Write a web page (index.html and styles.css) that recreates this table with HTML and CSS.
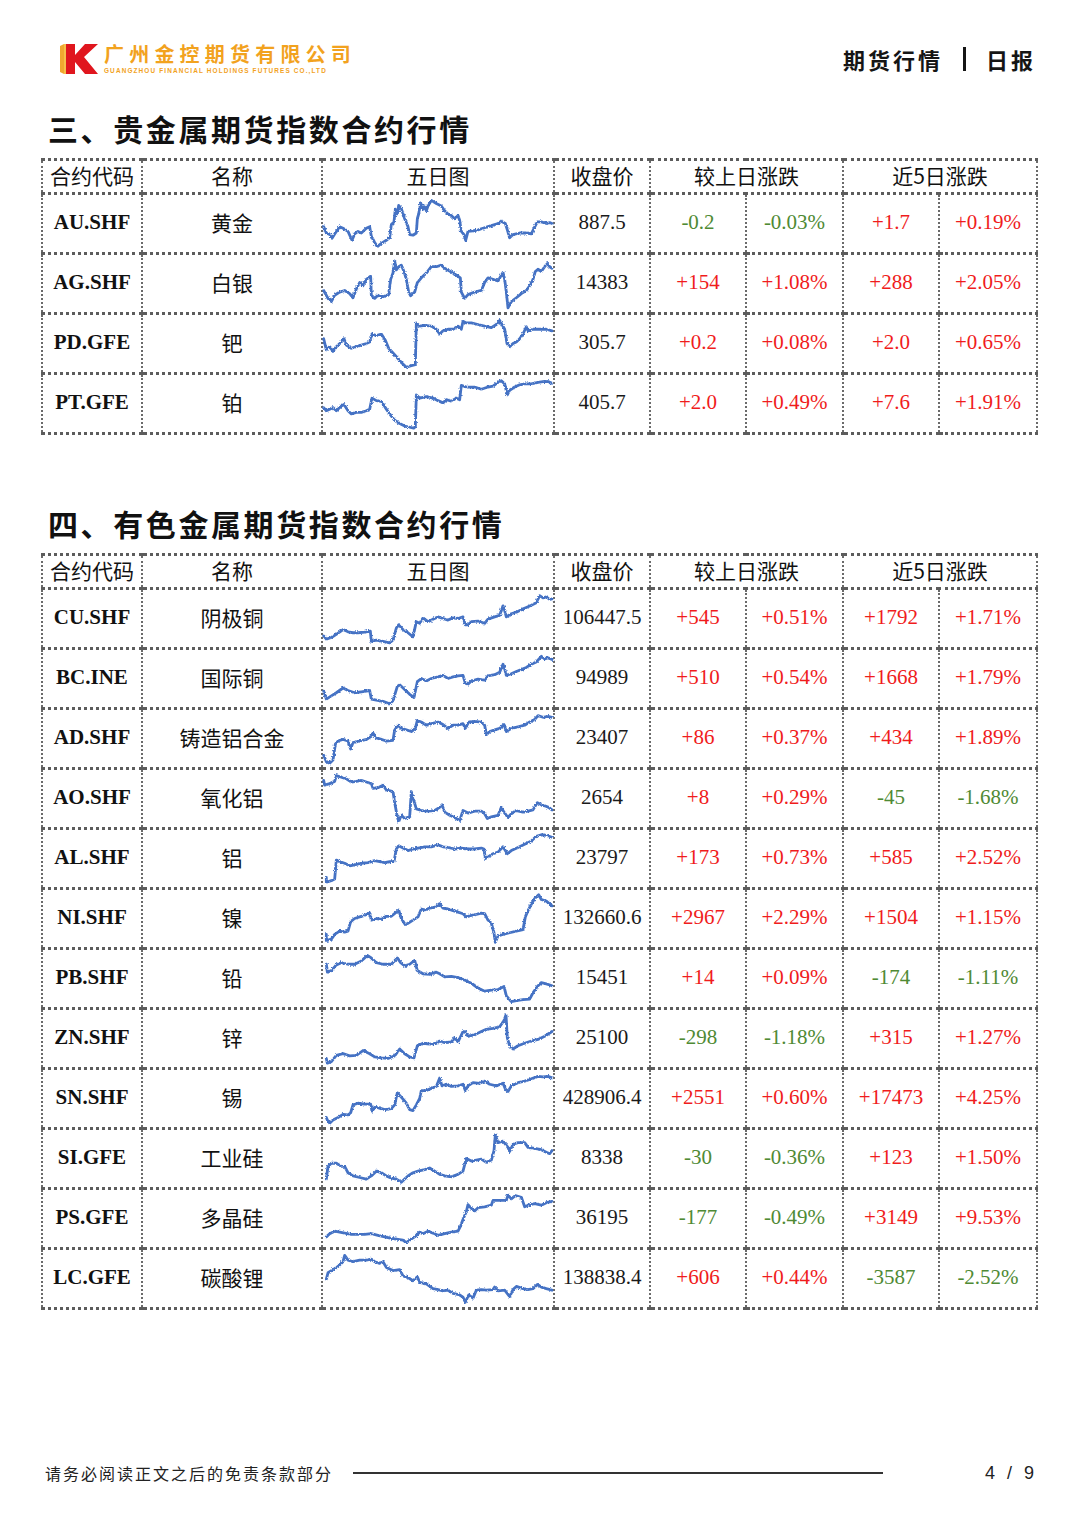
FILE: index.html
```html
<!DOCTYPE html>
<html lang="zh-CN">
<head>
<meta charset="utf-8">
<title>期货行情 日报</title>
<link rel="stylesheet" href="styles.css">
</head>
<body>
<svg class="defs" width="0" height="0" aria-hidden="true">
  <defs>
    <filter id="jitter" x="-5%" y="-20%" width="110%" height="140%">
      <feTurbulence type="fractalNoise" baseFrequency="0.22" numOctaves="2" seed="7" result="noise"/>
      <feDisplacementMap in="SourceGraphic" in2="noise" scale="9" xChannelSelector="R" yChannelSelector="G"/>
    </filter>
  </defs>
</svg>
<div class="page">
  <header class="top">
    <div class="logo">
      <svg class="logo-k" viewBox="0 0 38 30" width="38" height="30">
        <polygon points="0,2 4,0 4,30 0,28" fill="#f0a830"/>
        <polygon points="4,0 6,0 6,30 4,30" fill="#f6c04a"/>
        <polygon points="6,0 15,0 15,11 25,0 38,0 24,13 38,30 25,30 15,18 15,30 6,30" fill="#e0161e"/>
      </svg>
      <div class="logo-text">
        <div class="logo-cn">广州金控期货有限公司</div>
        <div class="logo-en">GUANGZHOU FINANCIAL HOLDINGS FUTURES CO.,LTD</div>
      </div>
    </div>
    <div class="top-right">
      <span>期货行情</span>
      <i class="bar"></i>
      <span>日报</span>
    </div>
  </header>

  <h2 class="title first">三、贵金属期货指数合约行情</h2>
  <table class="quotes">
    <colgroup>
      <col class="c1"><col class="c2"><col class="c3"><col class="c4"><col class="c5"><col class="c6"><col class="c7"><col class="c8">
    </colgroup>
    <thead>
      <tr><th>合约代码</th><th>名称</th><th>五日图</th><th>收盘价</th><th colspan="2">较上日涨跌</th><th colspan="2">近5日涨跌</th></tr>
    </thead>
    <tbody>
      <tr><td class="code">AU.SHF</td><td class="name">黄金</td>
        <td class="chart"><svg class="spark" viewBox="0 0 690 180" preserveAspectRatio="none"><polyline points="2,100 10,120 20,125 27,137 35,123 50,100 60,105 75,115 87,143 95,123 105,115 115,120 130,105 140,100 145,130 155,150 163,163 175,153 190,143 200,135 205,93 213,85 217,45 223,60 227,33 235,43 245,75 255,100 260,125 270,127 280,120 283,75 287,60 293,25 300,45 305,35 310,50 315,35 325,17 340,27 355,35 365,50 375,60 385,65 395,75 405,65 410,80 415,115 423,125 428,143 435,115 450,113 465,110 480,105 495,100 510,95 525,90 535,83 547,90 553,110 560,135 570,125 590,120 610,120 625,123 633,105 643,85 655,85 670,90 680,87 687,90"/></svg></td>
        <td class="num">887.5</td><td class="dn">-0.2</td><td class="dn">-0.03%</td><td class="up">+1.7</td><td class="up">+0.19%</td></tr>
      <tr><td class="code">AG.SHF</td><td class="name">白银</td>
        <td class="chart"><svg class="spark" viewBox="0 0 690 180" preserveAspectRatio="none"><polyline points="2,112 15,137 25,147 35,127 50,117 65,112 80,122 90,135 100,107 110,87 120,97 130,77 143,67 145,127 155,137 165,127 180,132 197,125 203,77 210,57 215,19 220,47 227,37 235,32 243,52 250,77 257,117 263,129 275,117 283,87 295,72 310,57 325,37 340,37 355,32 365,42 377,49 390,57 405,67 412,72 415,117 425,137 435,125 455,117 475,112 485,87 495,72 510,77 525,82 540,55 545,77 550,117 555,167 565,147 580,135 595,122 610,112 620,97 630,77 637,52 645,45 655,52 665,37 673,27 680,37 687,42"/></svg></td>
        <td class="num">14383</td><td class="up">+154</td><td class="up">+1.08%</td><td class="up">+288</td><td class="up">+2.05%</td></tr>
      <tr><td class="code">PD.GFE</td><td class="name">钯</td>
        <td class="chart"><svg class="spark" viewBox="0 0 690 180" preserveAspectRatio="none"><polyline points="2,75 10,110 20,100 30,115 40,100 55,85 63,75 70,95 85,105 100,100 115,95 130,90 140,85 147,60 160,65 175,60 187,80 197,105 210,120 223,135 235,150 250,165 265,160 277,157 280,25 290,35 305,33 325,35 340,45 350,60 360,50 375,45 390,45 405,35 415,45 420,20 430,25 445,25 465,30 485,35 505,40 520,30 530,17 537,30 545,45 552,90 560,100 570,90 580,85 590,75 600,60 610,37 615,50 630,45 650,45 670,45 687,50"/></svg></td>
        <td class="num">305.7</td><td class="up">+0.2</td><td class="up">+0.08%</td><td class="up">+2.0</td><td class="up">+0.65%</td></tr>
      <tr><td class="code">PT.GFE</td><td class="name">铂</td>
        <td class="chart"><svg class="spark" viewBox="0 0 690 180" preserveAspectRatio="none"><polyline points="2,103 10,113 20,108 30,103 40,113 55,98 63,93 75,113 85,123 100,118 115,118 130,113 140,108 147,73 160,81 175,83 187,103 200,123 215,143 230,153 245,161 260,165 272,168 277,163 280,63 290,73 310,68 330,73 345,81 360,88 370,78 385,83 400,73 410,78 415,33 430,38 455,38 475,45 495,38 510,35 525,23 535,18 545,28 553,63 560,48 575,38 590,31 605,28 625,28 645,23 665,20 677,21 687,26"/></svg></td>
        <td class="num">405.7</td><td class="up">+2.0</td><td class="up">+0.49%</td><td class="up">+7.6</td><td class="up">+1.91%</td></tr>
    </tbody>
  </table>

  <h2 class="title second">四、有色金属期货指数合约行情</h2>
  <table class="quotes">
    <colgroup>
      <col class="c1"><col class="c2"><col class="c3"><col class="c4"><col class="c5"><col class="c6"><col class="c7"><col class="c8">
    </colgroup>
    <thead>
      <tr><th>合约代码</th><th>名称</th><th>五日图</th><th>收盘价</th><th colspan="2">较上日涨跌</th><th colspan="2">近5日涨跌</th></tr>
    </thead>
    <tbody>
      <tr><td class="code">CU.SHF</td><td class="name">阴极铜</td>
        <td class="chart"><svg class="spark" viewBox="0 0 690 180" preserveAspectRatio="none"><polyline points="2,145 10,155 25,150 40,140 60,125 75,132 90,135 105,135 125,133 142,130 145,162 160,158 180,162 200,167 210,158 220,120 227,110 240,125 255,135 270,148 280,100 290,105 300,88 315,100 330,92 345,85 360,90 375,95 390,88 405,90 420,85 427,110 435,110 445,100 465,98 485,105 495,92 515,85 530,80 540,50 545,65 550,85 565,75 580,70 595,62 610,55 625,48 640,40 650,18 660,25 670,22 680,30 687,28"/></svg></td>
        <td class="num">106447.5</td><td class="up">+545</td><td class="up">+0.51%</td><td class="up">+1792</td><td class="up">+1.71%</td></tr>
      <tr><td class="code">BC.INE</td><td class="name">国际铜</td>
        <td class="chart"><svg class="spark" viewBox="0 0 690 180" preserveAspectRatio="none"><polyline points="2,130 10,155 25,145 40,135 60,120 75,128 95,135 115,132 140,128 145,155 160,158 180,162 200,170 210,160 223,115 230,110 245,125 260,140 273,150 283,100 295,90 310,98 325,90 345,85 360,80 375,90 390,85 405,82 420,80 427,105 435,108 445,98 465,92 485,95 495,82 515,78 530,70 540,45 545,60 550,80 565,75 580,68 595,62 610,55 625,45 640,38 655,20 665,28 675,25 687,30"/></svg></td>
        <td class="num">94989</td><td class="up">+510</td><td class="up">+0.54%</td><td class="up">+1668</td><td class="up">+1.79%</td></tr>
      <tr><td class="code">AD.SHF</td><td class="name">铸造铝合金</td>
        <td class="chart"><svg class="spark" viewBox="0 0 690 180" preserveAspectRatio="none"><polyline points="2,143 10,163 20,168 30,158 37,108 45,98 60,93 75,98 83,123 90,103 110,98 130,93 145,83 150,73 160,88 175,93 190,98 210,96 215,63 225,48 235,58 250,63 265,68 277,58 283,33 295,38 310,48 325,43 345,38 360,46 375,58 390,48 405,48 420,43 427,58 437,38 455,36 475,38 485,48 490,78 500,68 515,63 530,58 543,46 550,68 565,58 585,53 605,48 620,38 635,30 645,18 660,23 675,20 687,23"/></svg></td>
        <td class="num">23407</td><td class="up">+86</td><td class="up">+0.37%</td><td class="up">+434</td><td class="up">+1.89%</td></tr>
      <tr><td class="code">AO.SHF</td><td class="name">氧化铝</td>
        <td class="chart"><svg class="spark" viewBox="0 0 690 180" preserveAspectRatio="none"><polyline points="2,33 5,48 20,43 35,36 40,18 55,23 70,28 85,38 100,36 115,33 130,38 145,43 150,58 165,56 180,48 190,63 210,68 215,103 222,143 227,163 235,143 245,153 260,148 265,68 270,88 280,123 295,128 315,130 335,128 350,118 357,110 365,133 380,143 395,150 410,160 420,128 435,136 455,130 475,130 485,138 493,153 505,148 525,143 535,118 543,133 555,150 565,138 580,128 600,133 615,130 630,126 643,103 655,110 665,113 677,118 687,126"/></svg></td>
        <td class="num">2654</td><td class="up">+8</td><td class="up">+0.29%</td><td class="dn">-45</td><td class="dn">-1.68%</td></tr>
      <tr><td class="code">AL.SHF</td><td class="name">铝</td>
        <td class="chart"><svg class="spark" viewBox="0 0 690 180" preserveAspectRatio="none"><polyline points="10,150 10,165 25,160 35,155 40,95 50,100 65,105 80,113 95,110 115,105 135,103 155,97 170,100 185,103 200,100 213,100 220,60 227,50 240,57 255,65 270,60 285,57 305,53 325,53 345,47 360,53 375,55 395,60 415,57 435,60 455,60 475,57 483,60 487,90 495,85 510,75 525,70 540,53 547,65 553,75 565,65 585,55 605,45 625,35 640,20 655,15 670,17 687,23"/></svg></td>
        <td class="num">23797</td><td class="up">+173</td><td class="up">+0.73%</td><td class="up">+585</td><td class="up">+2.52%</td></tr>
      <tr><td class="code">NI.SHF</td><td class="name">镍</td>
        <td class="chart"><svg class="spark" viewBox="0 0 690 180" preserveAspectRatio="none"><polyline points="10,140 10,160 25,155 35,140 50,130 65,133 75,130 83,100 95,90 110,85 125,80 140,73 145,95 160,90 175,93 190,83 205,83 220,70 227,63 235,90 247,110 255,105 270,95 285,85 295,60 305,63 320,57 335,55 350,43 360,57 375,60 390,65 405,70 420,75 430,85 445,80 460,77 475,73 485,75 495,95 505,105 513,135 517,165 525,145 540,140 560,135 580,130 600,125 607,85 615,65 625,45 635,27 647,15 655,30 670,35 687,50"/></svg></td>
        <td class="num">132660.6</td><td class="up">+2967</td><td class="up">+2.29%</td><td class="up">+1504</td><td class="up">+1.15%</td></tr>
      <tr><td class="code">PB.SHF</td><td class="name">铅</td>
        <td class="chart"><svg class="spark" viewBox="0 0 690 180" preserveAspectRatio="none"><polyline points="10,45 13,70 25,65 40,47 55,40 75,45 95,45 115,35 133,17 145,25 160,40 180,45 205,45 223,25 233,40 245,50 260,45 275,33 283,65 300,75 320,77 340,70 350,75 365,85 385,83 405,87 425,95 445,105 465,120 485,130 505,127 525,125 543,115 550,145 565,163 580,160 600,157 620,155 630,135 643,115 655,103 670,107 687,113"/></svg></td>
        <td class="num">15451</td><td class="up">+14</td><td class="up">+0.09%</td><td class="dn">-174</td><td class="dn">-1.11%</td></tr>
      <tr><td class="code">ZN.SHF</td><td class="name">锌</td>
        <td class="chart"><svg class="spark" viewBox="0 0 690 180" preserveAspectRatio="none"><polyline points="10,153 13,168 25,163 40,143 60,138 80,145 100,143 120,128 140,138 155,148 175,151 195,153 215,145 230,123 245,138 260,148 273,151 283,113 300,105 320,108 340,105 350,98 365,103 385,101 395,88 405,101 420,68 427,68 435,83 455,78 475,68 490,61 510,58 530,53 543,33 549,15 553,88 560,113 570,123 585,113 605,105 625,98 645,93 665,83 687,68"/></svg></td>
        <td class="num">25100</td><td class="dn">-298</td><td class="dn">-1.18%</td><td class="up">+315</td><td class="up">+1.27%</td></tr>
      <tr><td class="code">SN.SHF</td><td class="name">锡</td>
        <td class="chart"><svg class="spark" viewBox="0 0 690 180" preserveAspectRatio="none"><polyline points="10,150 13,158 20,168 30,158 45,150 60,140 75,142 83,135 90,110 105,105 125,108 143,108 147,130 155,118 170,120 185,125 205,122 215,110 223,72 230,80 240,92 250,105 260,125 270,128 280,110 290,90 295,65 310,65 325,58 340,52 350,25 357,50 370,45 385,52 405,50 420,45 427,65 435,50 450,40 470,42 485,35 500,45 520,50 540,42 547,60 555,68 565,50 585,40 605,35 625,28 645,20 660,22 675,20 687,25"/></svg></td>
        <td class="num">428906.4</td><td class="up">+2551</td><td class="up">+0.60%</td><td class="up">+17473</td><td class="up">+4.25%</td></tr>
      <tr><td class="code">SI.GFE</td><td class="name">工业硅</td>
        <td class="chart"><svg class="spark" viewBox="0 0 690 180" preserveAspectRatio="none"><polyline points="10,155 15,115 25,105 40,105 55,115 65,115 75,135 90,145 110,150 130,155 145,145 160,130 175,135 190,145 205,152 220,155 235,165 245,155 255,145 270,135 285,130 305,125 320,120 335,130 350,140 365,145 385,148 405,140 420,130 430,90 445,98 460,95 475,92 490,102 505,95 513,65 517,15 525,40 540,35 555,55 560,68 570,45 585,40 605,40 615,55 635,58 655,62 670,70 680,75 687,65"/></svg></td>
        <td class="num">8338</td><td class="dn">-30</td><td class="dn">-0.36%</td><td class="up">+123</td><td class="up">+1.50%</td></tr>
      <tr><td class="code">PS.GFE</td><td class="name">多晶硅</td>
        <td class="chart"><svg class="spark" viewBox="0 0 690 180" preserveAspectRatio="none"><polyline points="10,148 20,138 35,130 50,133 65,136 85,140 105,140 125,140 145,138 165,143 185,148 205,153 225,156 240,158 250,166 260,158 275,148 290,133 300,138 315,130 330,136 345,143 365,138 385,133 405,130 413,113 420,93 430,68 435,46 445,58 455,66 465,56 485,53 505,48 510,33 525,33 550,33 555,16 565,28 577,18 595,23 605,53 615,48 635,43 655,48 670,40 687,36"/></svg></td>
        <td class="num">36195</td><td class="dn">-177</td><td class="dn">-0.49%</td><td class="up">+3149</td><td class="up">+9.53%</td></tr>
      <tr><td class="code">LC.GFE</td><td class="name">碳酸锂</td>
        <td class="chart"><svg class="spark" viewBox="0 0 690 180" preserveAspectRatio="none"><polyline points="10,92 15,72 30,62 45,52 60,37 65,17 75,32 90,37 110,32 130,32 145,29 155,37 170,42 180,37 190,55 210,65 230,62 240,82 255,87 270,97 283,85 290,102 310,107 330,122 345,125 360,129 375,127 390,137 410,142 420,149 427,165 437,142 450,152 460,127 475,125 490,127 510,125 515,117 525,129 545,127 560,147 570,125 580,115 600,122 615,125 630,122 643,109 655,117 670,122 687,127"/></svg></td>
        <td class="num">138838.4</td><td class="up">+606</td><td class="up">+0.44%</td><td class="dn">-3587</td><td class="dn">-2.52%</td></tr>
    </tbody>
  </table>

  <footer class="foot">
    <span class="foot-note">请务必阅读正文之后的免责条款部分</span>
    <span class="foot-line"></span>
    <span class="foot-page">4 / 9</span>
  </footer>
</div>
</body>
</html>
```

FILE: styles.css
```css
html, body {
  margin: 0;
  padding: 0;
  background: #ffffff;
}

.defs {
  position: absolute;
  width: 0;
  height: 0;
  overflow: hidden;
}

.page {
  width: 1080px;
  height: 1527px;
  box-sizing: border-box;
  overflow: hidden;
  font-family: "Noto Sans CJK SC", "Liberation Sans", sans-serif;
  color: #111111;
}

/* ---------- header ---------- */
.top {
  display: flex;
  align-items: center;
  justify-content: space-between;
  height: 34px;
  padding: 42px 44px 0 60px;
}

.logo {
  display: flex;
  align-items: center;
  gap: 6px;
}

.logo-k {
  display: block;
  flex: none;
}

.logo-text {
  display: flex;
  flex-direction: column;
  gap: 2px;
}

.logo-cn {
  font-family: "Noto Sans CJK SC", sans-serif;
  font-weight: 700;
  font-size: 20px;
  line-height: 20px;
  height: 21px;
  letter-spacing: 5.2px;
  color: #f2a21e;
}

.logo-en {
  font-family: "Liberation Sans", sans-serif;
  font-weight: 700;
  font-size: 6.4px;
  line-height: 7px;
  letter-spacing: 1.15px;
  color: #f2a21e;
  white-space: nowrap;
}

.top-right {
  display: flex;
  align-items: center;
  gap: 20px;
  font-family: "Noto Sans CJK SC", sans-serif;
  font-weight: 700;
  font-size: 22px;
  letter-spacing: 3px;
  color: #151515;
}

.top-right .bar {
  display: block;
  width: 3px;
  height: 24px;
  background: #151515;
}

/* ---------- section titles ---------- */
.title {
  margin: 0 0 0 48px;
  font-family: "Noto Sans CJK SC", sans-serif;
  font-weight: 700;
  font-size: 30px;
  line-height: 36px;
  letter-spacing: 2.6px;
  color: #111111;
}

.title.first {
  margin-top: 34px;
}

.title.second {
  margin-top: 70px;
}

/* ---------- tables ---------- */
.quotes {
  margin: 12px 0 0 41px;
  width: 995px;
  table-layout: fixed;
  border-collapse: collapse;
}

.title.second + .quotes {
  margin-top: 12px;
}

.quotes col.c1 { width: 100px; }
.quotes col.c2 { width: 180px; }
.quotes col.c3 { width: 232px; }
.quotes col.c4 { width: 96px; }
.quotes col.c5 { width: 96px; }
.quotes col.c6 { width: 97px; }
.quotes col.c7 { width: 96px; }
.quotes col.c8 { width: 98px; }

.quotes th,
.quotes td {
  border-top: 3px dotted #5c5c5c;
  border-bottom: 3px dotted #5c5c5c;
  border-left: 2px dotted #6a6a6a;
  border-right: 2px dotted #6a6a6a;
  padding: 0 0 3px;
  text-align: center;
  vertical-align: middle;
}

.quotes thead tr {
  height: 34px;
}

.quotes th {
  font-family: "Noto Sans CJK SC", sans-serif;
  font-weight: 400;
  font-size: 21px;
  line-height: 26px;
  color: #111111;
}

.quotes tbody tr {
  height: 60px;
}

.quotes td {
  font-family: "Liberation Serif", "Noto Sans CJK SC", serif;
  font-size: 21px;
  line-height: 26px;
  color: #1a1a1a;
}

.quotes td.code {
  font-weight: 700;
  color: #111111;
}

.quotes td.name {
  font-family: "Noto Sans CJK SC", sans-serif;
  font-weight: 400;
  color: #111111;
}

.quotes td.up {
  color: #f01c1c;
}

.quotes td.dn {
  color: #4f8a34;
}

.quotes td.chart {
  padding: 0;
}

.spark {
  display: block;
  width: 100%;
  height: 57px;
  overflow: visible;
}

.spark polyline {
  fill: none;
  stroke: #4472c4;
  stroke-width: 2.8px;
  stroke-linejoin: round;
  stroke-linecap: round;
  vector-effect: non-scaling-stroke;
  filter: url(#jitter);
}

/* ---------- footer ---------- */
.foot {
  display: flex;
  align-items: center;
  height: 20px;
  margin-top: 153px;
  padding: 0 44px 0 45px;
}

.foot-note {
  font-family: "Noto Sans CJK SC", sans-serif;
  font-size: 16px;
  letter-spacing: 2px;
  color: #222222;
  white-space: nowrap;
}

.foot-line {
  display: block;
  width: 530px;
  height: 1.5px;
  margin-left: 20px;
  background: #333333;
}

.foot-page {
  margin-left: auto;
  font-family: "Liberation Sans", sans-serif;
  font-size: 18px;
  letter-spacing: 2px;
  word-spacing: 3px;
  color: #222222;
  white-space: nowrap;
}
```
